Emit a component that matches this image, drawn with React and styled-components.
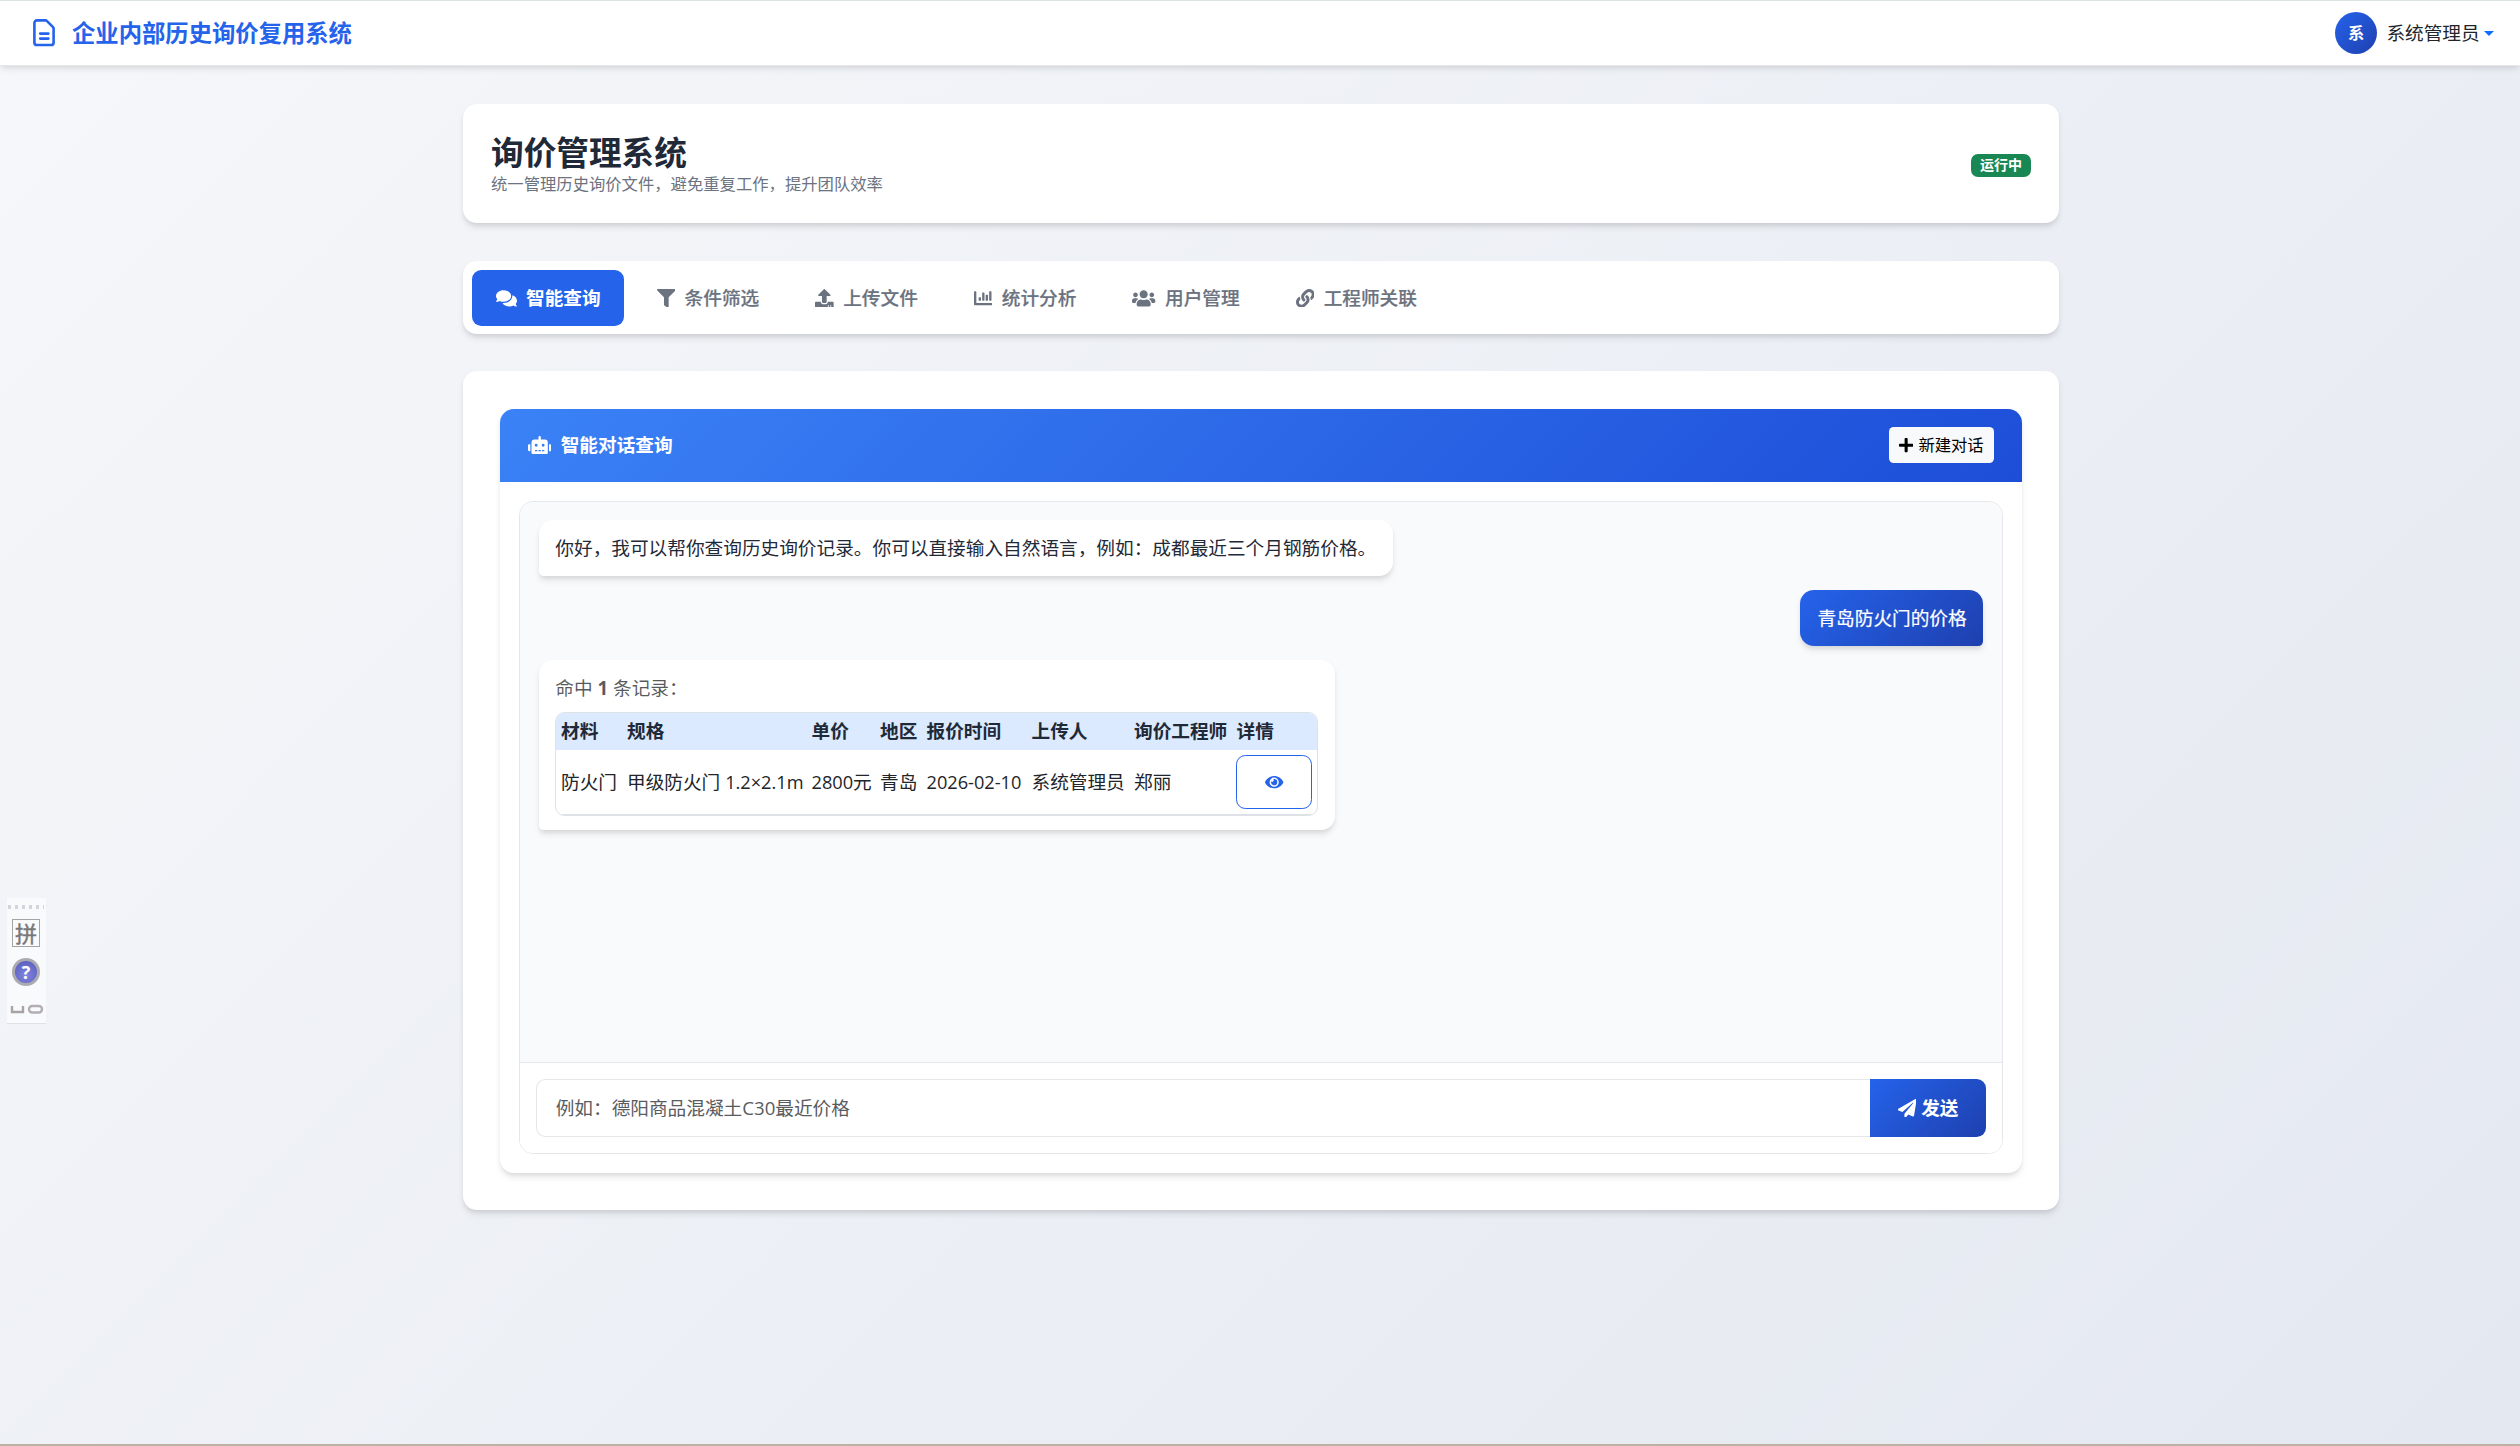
import React from "react";
import styled, { createGlobalStyle, css } from "styled-components";
import {
  FaComments,
  FaFilter,
  FaUpload,
  FaChartBar,
  FaUsers,
  FaLink,
  FaRobot,
  FaPlus,
  FaEye,
  FaPaperPlane,
} from "react-icons/fa";

const GlobalStyle = createGlobalStyle`
  *, *::before, *::after { box-sizing: border-box; }
  html, body { margin: 0; padding: 0; }
  body {
    font-family: "Open Sans", "Noto Sans CJK SC", sans-serif;
    font-size: 18.667px;
    line-height: 28px;
    color: #212529;
  }
  button, input { font-family: inherit; font-size: inherit; line-height: inherit; }
  svg { display: block; flex: none; }
`;

const cardShadow = "0 4.7px 7px -1.2px rgba(0,0,0,0.1), 0 2.3px 4.7px -1.2px rgba(0,0,0,0.06)";
const primaryGradient = "linear-gradient(135deg, #2563eb 0%, #1e40af 100%)";

const Page = styled.div`
  position: relative;
  display: flex;
  flex-direction: column;
  height: 1446px;
  overflow: hidden;
  background: linear-gradient(135deg, #f5f7fa 0%, #e4e8f0 100%);
  border-top: 1px solid #dbe4e1;
  border-bottom: 2px solid #bdb1a5;
`;

const Glyph = styled.span`
  flex: none;
  display: block;

  svg {
    width: ${(p) => p.$ratio || 1}em;
    height: 1em;
  }
`;

const Navbar = styled.header`
  flex: none;
  display: flex;
  align-items: center;
  justify-content: space-between;
  height: 65px;
  padding: 0 26px 0 32px;
  background: #fff;
  border-bottom: 1px solid #e5e7eb;
  box-shadow: ${cardShadow};
`;

const Brand = styled.div`
  display: flex;
  align-items: center;
  gap: 15px;
  padding-bottom: 1px;
  color: #2563eb;
  font-size: 23.333px;
  font-weight: 700;
`;

const UserMenu = styled.div`
  display: flex;
  align-items: center;
  gap: 9.333px;
`;

const Avatar = styled.span`
  display: flex;
  align-items: center;
  justify-content: center;
  width: 42px;
  height: 42px;
  border-radius: 50%;
  background: ${primaryGradient};
  color: #fff;
  font-size: 16.333px;
  font-weight: 700;
`;

const Caret = styled.span`
  margin-left: -5px;
  border-top: 5.6px solid #0d6efd;
  border-left: 5.6px solid transparent;
  border-right: 5.6px solid transparent;
`;

const Content = styled.main`
  width: 1596px;
  margin: 38px 461px 0 463px;
  display: flex;
  flex-direction: column;
`;

const Card = styled.section`
  background: #fff;
  border-radius: 14px;
  box-shadow: ${cardShadow};
`;

const PageHeader = styled(Card)`
  display: flex;
  align-items: center;
  justify-content: space-between;
  height: 119px;
  padding: 2px 28px 0;
  margin-bottom: 38px;
`;

const Heading = styled.h1`
  margin: 0;
  color: #1f2937;
  font-size: 32.667px;
  font-weight: 700;
  line-height: 39px;
`;

const Subtitle = styled.p`
  margin: 0;
  color: #6b7280;
  font-size: 16.333px;
  line-height: 24.5px;
`;

const Badge = styled.span`
  padding: 4.4px 9.1px 5.4px;
  border-radius: 7px;
  background: #198754;
  color: #fff;
  font-size: 14px;
  font-weight: 700;
  line-height: 14px;
  margin-top: 2px;
`;

const Tabs = styled(Card).attrs({ as: "nav" })`
  display: flex;
  gap: 9.333px;
  height: 73px;
  padding: 9px 9.333px 8px;
  margin-bottom: 37px;
`;

const Tab = styled.button`
  display: flex;
  align-items: center;
  gap: 9.333px;
  height: 56px;
  padding: 0 23.333px;
  border: 0;
  border-radius: 9.333px;
  background: ${(p) => (p.$active ? "#2563eb" : "transparent")};
  color: ${(p) => (p.$active ? "#fff" : "#6b7280")};
  font-weight: ${(p) => (p.$active ? 700 : 500)};
  -webkit-text-stroke: ${(p) => (p.$active ? 0 : "0.2px")};
`;

const Panel = styled(Card)`
  height: 839px;
  padding: 38px 37px 37px;
`;

const ChatCard = styled(Card)`
  display: flex;
  flex-direction: column;
  height: 764px;
  overflow: hidden;
`;

const ChatHeader = styled.header`
  flex: none;
  display: flex;
  align-items: center;
  justify-content: space-between;
  height: 73px;
  padding: 0 28px 1px;
  background: linear-gradient(135deg, #3b82f6 0%, #1d4ed8 100%);
  color: #fff;
`;

const ChatTitle = styled.div`
  display: flex;
  align-items: center;
  gap: 9.333px;
  font-weight: 700;
`;

const NewChat = styled.button`
  display: flex;
  align-items: center;
  gap: 5px;
  height: 36px;
  padding: 0 10.3px;
  border: 0;
  border-radius: 4.667px;
  background: #f8f9fa;
  color: #000;
  font-size: 16.333px;
`;

const ChatBox = styled.div`
  flex: 1;
  display: flex;
  flex-direction: column;
  margin: 19px;
  border: 1px solid #e5e7eb;
  border-radius: 14px;
  background: #fff;
  overflow: hidden;
`;

const Messages = styled.div`
  flex: 1;
  display: flex;
  flex-direction: column;
  align-items: flex-start;
  gap: 14px;
  padding: 18px 19px;
  background: #f9fafb;
`;

const Bubble = styled.div`
  padding: 14px 16.333px;
  border-radius: 14px 14px 14px 4.667px;
  background: #fff;
  color: #1f2937;
  box-shadow: ${cardShadow};
  ${(p) =>
    p.$own &&
    css`
      align-self: flex-end;
      padding-left: 17.333px;
      border-radius: 14px 14px 4.667px 14px;
      background: ${primaryGradient};
      color: #fff;
      -webkit-text-stroke: 0.2px;
    `}
`;

const Hits = styled.div`
  color: rgba(33, 37, 41, 0.75);
  margin-bottom: 10px;

  strong { font-weight: 700; }
`;

const TableFrame = styled.div`
  width: 763px;
  height: 104px;
  border: 1px solid #dee2e6;
  border-radius: 9.333px;
  overflow: hidden;
`;

const Table = styled.table`
  width: 100%;
  table-layout: fixed;
  border-collapse: collapse;
  white-space: nowrap;

  th, td {
    padding: 0 4.667px;
    text-align: left;
    vertical-align: middle;
  }
  th {
    height: 37px;
    padding-bottom: 2px;
    background: #dbeafe;
    color: #1f2937;
    font-weight: 700;
  }
  td {
    height: 64px;
    border-bottom: 1px solid #dee2e6;
    color: #212529;
  }
`;

const DetailButton = styled.button`
  display: flex;
  align-items: center;
  justify-content: center;
  width: 76px;
  height: 54px;
  border: 1px solid #2563eb;
  border-radius: 9.333px;
  background: #fff;
  color: #2563eb;
  font-size: 16.333px;
`;

const Composer = styled.form`
  flex: none;
  display: flex;
  height: 91px;
  padding: 16px;
  border-top: 1px solid #e5e7eb;
  background: #fff;
`;

const Prompt = styled.input`
  flex: 1;
  min-width: 0;
  height: 58px;
  padding: 0 18.667px 2px;
  border: 1px solid #e5e7eb;
  border-right: 0;
  border-radius: 9.333px 0 0 9.333px;
  background: #fff;
  outline: 0;

  &::placeholder { color: #595c5f; opacity: 1; }
`;

const Send = styled.button`
  display: flex;
  align-items: center;
  justify-content: center;
  gap: 5px;
  width: 116px;
  height: 58px;
  border: 0;
  border-radius: 0 9.333px 9.333px 0;
  background: ${primaryGradient};
  color: #fff;
  font-weight: 700;
`;

const Latin = styled.span`
  font-size: 0.975em;
`;

const ImeBar = styled.aside`
  position: absolute;
  left: 7px;
  top: 897px;
  display: flex;
  flex-direction: column;
  align-items: center;
  width: 39px;
  height: 126px;
  padding: 7px 1px 0 0;
  background: #f9fafb;
  border-bottom: 1px solid #dfe1e5;
`;

const Grip = styled.div`
  width: 36px;
  height: 4px;
  background: repeating-linear-gradient(90deg, #d4d5d8 0 3px, transparent 3px 7px);
`;

const ImeMode = styled.div`
  display: flex;
  align-items: center;
  justify-content: center;
  width: 28px;
  height: 28px;
  margin-top: 10px;
  border: 1.5px solid #a4a4a4;
  color: #777;
  font-size: 22px;
  line-height: 24px;
  -webkit-text-stroke: 0.4px;
`;

const ImeHelp = styled.div`
  display: flex;
  align-items: center;
  justify-content: center;
  width: 28px;
  height: 28px;
  margin-top: 11px;
  border: 3px solid #aaaab0;
  border-radius: 50%;
  background: radial-gradient(circle at 50% 65%, #8286e0, #5256b8);
  color: #fff;
  font-size: 18px;
  font-weight: 700;
  line-height: 20px;
`;

const ImeShapes = styled.svg`
  margin-top: 18px;
`;

const FileIcon = () => (
  <svg width="25" height="30" viewBox="0 0 25 30" fill="none" stroke="currentColor" strokeWidth="2.6" strokeLinecap="round" strokeLinejoin="round">
    <path d="M5 2.4h8.6a1.6 1.6 0 0 1 1.15.5l6.3 6.3a1.8 1.8 0 0 1 .55 1.25V24.4a2.6 2.6 0 0 1-2.6 2.6H5a2.6 2.6 0 0 1-2.6-2.6V5A2.6 2.6 0 0 1 5 2.4z" />
    <path d="M8.2 15.6h8.2M8.2 20.6h8.2" />
  </svg>
);

const tabs = [
  { icon: FaComments, ratio: 1.125, label: "智能查询", active: true },
  { icon: FaFilter, ratio: 1, label: "条件筛选" },
  { icon: FaUpload, ratio: 1, label: "上传文件" },
  { icon: FaChartBar, ratio: 1, label: "统计分析" },
  { icon: FaUsers, ratio: 1.25, label: "用户管理" },
  { icon: FaLink, ratio: 1, label: "工程师关联" },
];

const columns = [
  { title: "材料", width: 66 },
  { title: "规格", width: 184.5 },
  { title: "单价", width: 68.5 },
  { title: "地区", width: 46.5 },
  { title: "报价时间", width: 105 },
  { title: "上传人", width: 102.5 },
  { title: "询价工程师", width: 102.5 },
  { title: "详情", width: 85.5 },
];

export default function App() {
  return (
    <>
      <GlobalStyle />
      <Page>
        <Navbar>
          <Brand>
            <FileIcon />
            企业内部历史询价复用系统
          </Brand>
          <UserMenu>
            <Avatar>系</Avatar>
            系统管理员
            <Caret />
          </UserMenu>
        </Navbar>
        <Content>
          <PageHeader>
            <div>
              <Heading>询价管理系统</Heading>
              <Subtitle>统一管理历史询价文件，避免重复工作，提升团队效率</Subtitle>
            </div>
            <Badge>运行中</Badge>
          </PageHeader>
          <Tabs>
            {tabs.map(({ icon: Icon, ratio, label, active }) => (
              <Tab key={label} $active={active}>
                <Glyph $ratio={ratio}>
                  <Icon />
                </Glyph>
                {label}
              </Tab>
            ))}
          </Tabs>
          <Panel>
            <ChatCard>
              <ChatHeader>
                <ChatTitle>
                  <Glyph $ratio={1.25}>
                    <FaRobot />
                  </Glyph>
                  智能对话查询
                </ChatTitle>
                <NewChat>
                  <Glyph $ratio={0.875}>
                    <FaPlus />
                  </Glyph>
                  新建对话
                </NewChat>
              </ChatHeader>
              <ChatBox>
                <Messages>
                  <Bubble>你好，我可以帮你查询历史询价记录。你可以直接输入自然语言，例如：成都最近三个月钢筋价格。</Bubble>
                  <Bubble $own>青岛防火门的价格</Bubble>
                  <Bubble>
                    <Hits>
                      命中 <strong>1</strong> 条记录：
                    </Hits>
                    <TableFrame>
                      <Table>
                        <colgroup>
                          {columns.map((c) => (
                            <col key={c.title} style={{ width: c.width }} />
                          ))}
                        </colgroup>
                        <thead>
                          <tr>
                            {columns.map((c) => (
                              <th key={c.title}>{c.title}</th>
                            ))}
                          </tr>
                        </thead>
                        <tbody>
                          <tr>
                            <td>防火门</td>
                            <td>甲级防火门 <Latin>1.2×2.1m</Latin></td>
                            <td><Latin>2800</Latin>元</td>
                            <td>青岛</td>
                            <td><Latin>2026-02-10</Latin></td>
                            <td>系统管理员</td>
                            <td>郑丽</td>
                            <td>
                              <DetailButton aria-label="详情">
                                <Glyph $ratio={1.125}>
                                  <FaEye />
                                </Glyph>
                              </DetailButton>
                            </td>
                          </tr>
                        </tbody>
                      </Table>
                    </TableFrame>
                  </Bubble>
                </Messages>
                <Composer>
                  <Prompt placeholder="例如：德阳商品混凝土C30最近价格" />
                  <Send type="button">
                    <Glyph>
                      <FaPaperPlane />
                    </Glyph>
                    发送
                  </Send>
                </Composer>
              </ChatBox>
            </ChatCard>
          </Panel>
        </Content>
        <ImeBar>
          <Grip />
          <ImeMode>拼</ImeMode>
          <ImeHelp>?</ImeHelp>
          <ImeShapes width="36" height="10" viewBox="0 0 36 10" fill="none" strokeWidth="2.4">
            <path d="M4 2v6h11V2" stroke="#a9a3a6" />
            <rect x="21" y="2" width="13" height="6.5" rx="3.2" stroke="#b3aeb4" />
          </ImeShapes>
        </ImeBar>
      </Page>
    </>
  );
}
